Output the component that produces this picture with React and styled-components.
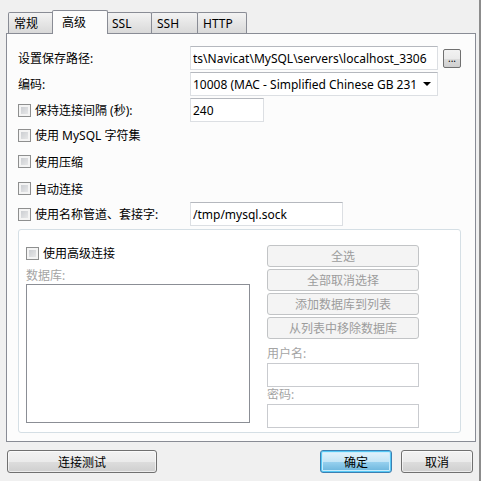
import styled, { createGlobalStyle } from "styled-components";

const GlobalStyle = createGlobalStyle`
  html, body { margin: 0; padding: 0; }
  body {
    background: #f0f0f0;
    font-family: "Noto Sans", "Noto Sans CJK SC", sans-serif;
    font-size: 12px;
    color: #000;
  }
  * { box-sizing: border-box; }
`;

const Window = styled.div`
  width: 481px;
  height: 481px;
  display: flex;
  flex-direction: column;
  border-right: 2px solid #8c8c8c;
  overflow: hidden;
`;

const TabStrip = styled.div`
  display: flex;
  align-items: flex-end;
  height: 33px;
  padding-left: 8px;
  position: relative;
  z-index: 1;
`;

const Tab = styled.div`
  width: ${(p) => p.$w}px;
  height: ${(p) => (p.$active ? "24px" : "21px")};
  margin: ${(p) => (p.$active ? "0 -1px -1px -3px" : "0 0 0 -1px")};
  padding: ${(p) => (p.$active ? "0 0 2px 9px" : "0 0 0 5px")};
  display: flex;
  align-items: center;
  border: 1px solid #898c95;
  border-bottom: none;
  border-radius: 2px 2px 0 0;
  background: ${(p) =>
    p.$active ? "#fcfcfc" : "linear-gradient(#f3f3f3, #e6e6e6 50%, #d9d9d9)"};
  position: relative;
  z-index: ${(p) => (p.$active ? 2 : 1)};
  &:first-child {
    margin-left: 0;
  }
`;

const Panel = styled.div`
  margin-left: 6px;
  width: 470px;
  height: 409px;
  border: 1px solid #898c95;
  background: #fcfcfc;
  padding: 12px 0 0 11px;
  display: flex;
  flex-direction: column;
`;

const Row = styled.div`
  display: flex;
  align-items: center;
  height: ${(p) => p.$h || 24}px;
  margin-top: ${(p) => p.$mt || 0}px;
`;

const Label = styled.div`
  width: 172px;
  flex: none;
  display: flex;
  align-items: center;
  white-space: nowrap;
`;

const Check = styled.span`
  width: 13px;
  height: 13px;
  flex: none;
  border: 1px solid #8e8f8f;
  background: linear-gradient(135deg, #c4c7cc, #eeeeee);
  box-shadow: inset 0 0 0 2px #f4f4f4;
  margin-right: 4px;
`;

const TextBox = styled.input`
  width: ${(p) => p.$w}px;
  height: 24px;
  border: 1px solid #dcdfe3;
  border-top-color: #b5b8be;
  background: #fff;
  padding: 0 2px;
  font: inherit;
  color: #000;
  outline: none;
  margin: 0;
`;

const Select = styled.div`
  width: 248px;
  height: 24px;
  border: 1px solid #dcdfe3;
  border-top-color: #b5b8be;
  background: #fff;
  display: flex;
  align-items: center;
  padding-left: 2px;
`;

const SelectText = styled.span`
  flex: 1;
  overflow: hidden;
  white-space: nowrap;
`;

const Arrow = styled.span`
  width: 20px;
  flex: none;
  display: flex;
  justify-content: center;
  &::after {
    content: "";
    border-left: 4px solid transparent;
    border-right: 4px solid transparent;
    border-top: 4px solid #000;
  }
`;

const SmallButton = styled.button`
  width: 18px;
  height: 19px;
  margin-left: 5px;
  padding: 0 0 4px;
  border: 1px solid #707070;
  border-radius: 2px;
  background: linear-gradient(#f2f2f2, #ebebeb 50%, #dddddd 51%, #cfcfcf);
  font: inherit;
  font-size: 10px;
  line-height: 1;
  display: flex;
  align-items: flex-end;
  justify-content: center;
`;

const GroupBox = styled.div`
  margin-top: 3px;
  width: 443px;
  height: 204px;
  border: 1px solid #d5dfe5;
  border-radius: 3px;
  background: #fff;
  padding: 15px 0 0 7px;
  display: grid;
  grid-template-columns: 224px 152px;
  column-gap: 17px;
  align-items: start;
`;

const Column = styled.div`
  display: flex;
  flex-direction: column;
`;

const CheckRow = styled.div`
  display: flex;
  align-items: center;
  height: 16px;
`;

const DimLabel = styled.div`
  color: #a4a4a4;
  line-height: 16px;
  height: 16px;
  margin-top: ${(p) => p.$mt || 0}px;
`;

const ListBox = styled.div`
  height: 139px;
  border: 1px solid #8b8e95;
  background: #fff;
`;

const Button = styled.button`
  width: ${(p) => p.$w}px;
  height: ${(p) => p.$h || 23}px;
  margin: 0;
  margin-top: ${(p) => p.$mt || 0}px;
  padding: 0;
  font: inherit;
  color: #000;
  border: 1px solid #707070;
  border-radius: 3px;
  background: linear-gradient(#f2f2f2, #ebebeb 50%, #dddddd 51%, #cfcfcf);
  box-shadow: inset 0 0 0 1px rgba(255, 255, 255, 0.6);
  &:disabled {
    color: #9c9c9c;
    border-color: #c2c4c6;
    background: #f4f4f4;
    box-shadow: none;
  }
`;

const DefaultButton = styled(Button)`
  border-color: #3c7fb1;
  background: linear-gradient(#e5f4fc, #c4e5f6 50%, #98d1ef 51%, #68b3db);
  box-shadow: inset 0 0 0 1px #55c8f5, inset 0 0 0 2px #c8ecfc;
`;

const DisabledInput = styled.div`
  height: 24px;
  margin-top: 1px;
  border: 1px solid #c9cbcf;
  background: #fff;
`;

const BottomBar = styled.div`
  display: flex;
  justify-content: space-between;
  padding: 8px 6px 0 7px;
`;

const ButtonGroup = styled.div`
  display: flex;
  gap: 9px;
`;

export default function App() {
  return (
    <>
      <GlobalStyle />
      <Window>
        <TabStrip>
          <Tab $w={47}>常规</Tab>
          <Tab $w={56} $active>高级</Tab>
          <Tab $w={46}>SSL</Tab>
          <Tab $w={47}>SSH</Tab>
          <Tab $w={50}>HTTP</Tab>
        </TabStrip>
        <Panel>
          <Row>
            <Label>设置保存路径:</Label>
            <TextBox $w={248} readOnly defaultValue="ts\Navicat\MySQL\servers\localhost_3306" />
            <SmallButton>...</SmallButton>
          </Row>
          <Row $mt={2}>
            <Label>编码:</Label>
            <Select>
              <SelectText>10008 (MAC - Simplified Chinese GB 2312)</SelectText>
              <Arrow />
            </Select>
          </Row>
          <Row $mt={2}>
            <Label>
              <Check />
              保持连接间隔 (秒):
            </Label>
            <TextBox $w={74} readOnly defaultValue="240" />
          </Row>
          <Row $h={26}>
            <Label>
              <Check />
              使用 MySQL 字符集
            </Label>
          </Row>
          <Row $h={27}>
            <Label>
              <Check />
              使用压缩
            </Label>
          </Row>
          <Row $h={27}>
            <Label>
              <Check />
              自动连接
            </Label>
          </Row>
          <Row>
            <Label>
              <Check />
              使用名称管道、套接字:
            </Label>
            <TextBox $w={153} readOnly defaultValue="/tmp/mysql.sock" />
          </Row>
          <GroupBox>
            <Column>
              <CheckRow>
                <Check />
                使用高级连接
              </CheckRow>
              <DimLabel $mt={7}>数据库:</DimLabel>
              <ListBox />
            </Column>
            <Column>
              <Button $w={152} $h={22} disabled>全选</Button>
              <Button $w={152} $h={22} $mt={2} disabled>全部取消选择</Button>
              <Button $w={152} $h={22} $mt={2} disabled>添加数据库到列表</Button>
              <Button $w={152} $h={22} $mt={2} disabled>从列表中移除数据库</Button>
              <DimLabel $mt={7}>用户名:</DimLabel>
              <DisabledInput />
              <DimLabel>密码:</DimLabel>
              <DisabledInput />
            </Column>
          </GroupBox>
        </Panel>
        <BottomBar>
          <Button $w={150}>连接测试</Button>
          <ButtonGroup>
            <DefaultButton $w={72}>确定</DefaultButton>
            <Button $w={72}>取消</Button>
          </ButtonGroup>
        </BottomBar>
      </Window>
    </>
  );
}
